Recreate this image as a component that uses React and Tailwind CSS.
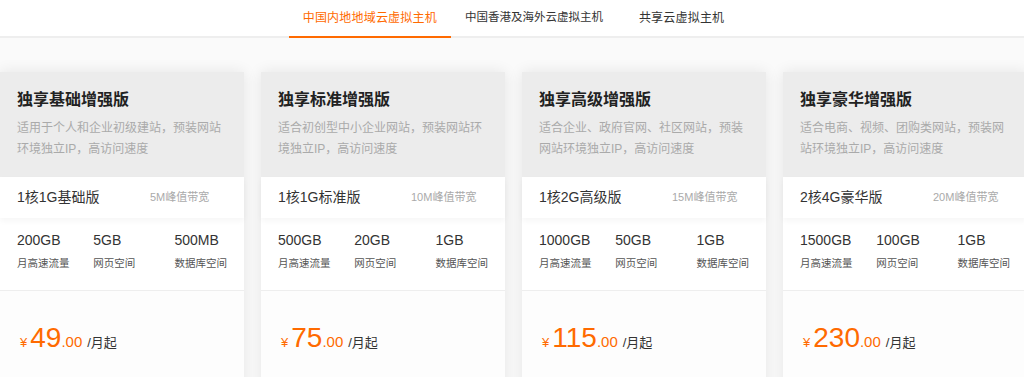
const tabs = [
  { label: '中国内地地域云虚拟主机', active: true, cls: 'px-[14px] text-[12px] tracking-[0.2px]' },
  { label: '中国香港及海外云虚拟主机', active: false, cls: 'px-[14px] text-[11.5px]' },
  { label: '共享云虚拟主机', active: false, cls: 'pl-[22px] pr-[14px] text-[12px] tracking-[0.2px]' },
];

const plans = [
  {
    title: '独享基础增强版',
    desc: '适用于个人和企业初级建站，预装网站环境独立IP，高访问速度',
    spec: '1核1G基础版',
    bw: '5M峰值带宽',
    stats: ['200GB', '5GB', '500MB'],
    price: '49',
  },
  {
    title: '独享标准增强版',
    desc: '适合初创型中小企业网站，预装网站环境独立IP，高访问速度',
    spec: '1核1G标准版',
    bw: '10M峰值带宽',
    stats: ['500GB', '20GB', '1GB'],
    price: '75',
  },
  {
    title: '独享高级增强版',
    desc: '适合企业、政府官网、社区网站，预装网站环境独立IP，高访问速度',
    spec: '1核2G高级版',
    bw: '15M峰值带宽',
    stats: ['1000GB', '50GB', '1GB'],
    price: '115',
  },
  {
    title: '独享豪华增强版',
    desc: '适合电商、视频、团购类网站，预装网站环境独立IP，高访问速度',
    spec: '2核4G豪华版',
    bw: '20M峰值带宽',
    stats: ['1500GB', '100GB', '1GB'],
    price: '230',
  },
];

const labels = ['月高速流量', '网页空间', '数据库空间'];

const PlanCard = ({ plan }) => (
  <div className="w-[244px] shrink-0 bg-[#fdfdfd] shadow-[0_0_14px_rgba(0,0,0,0.09)]">
    {/* Header */}
    <div className="bg-[#ececec] px-[17px] pt-[16px] pb-[16px] h-[105px]">
      <h3 className="text-[16px] leading-[24px] font-bold text-[#222]">{plan.title}</h3>
      <p className="mt-[6px] text-[12px] leading-[21px] text-[#aaa]">{plan.desc}</p>
    </div>

    {/* Spec row */}
    <div className="relative z-[1] h-[41px] bg-white flex items-center px-[17px] shadow-[0_3px_6px_rgba(0,0,0,0.04)]">
      <span className="w-[133px] text-[14px] text-[#333]">{plan.spec}</span>
      <span className="text-[11px] text-[#aaa]">{plan.bw}</span>
    </div>

    {/* Stats */}
    <div className="flex px-[17px] pt-[12px] pb-[19px] border-b border-[#eee] bg-white">
      {plan.stats.map((s, i) => (
        <div key={i} className={`whitespace-nowrap ${i === 0 ? 'w-[77px]' : i === 1 ? 'w-[82px]' : 'flex-1'}`}>
          <div className="text-[14px] leading-[20px] text-[#333]">{s}</div>
          <div className="mt-[5px] text-[10.5px] leading-[16px] text-[#555]">{labels[i]}</div>
        </div>
      ))}
    </div>

    {/* Price */}
    <div className="flex items-baseline px-[20px] pt-[33px] pb-[40px]">
      <span className="text-[13px] text-[#ff6a00] mr-[3px]">¥</span>
      <span className="text-[28px] leading-none text-[#ff6a00]">{plan.price}</span>
      <span className="text-[15px] text-[#ff6a00]">.00</span>
      <span className="ml-[5px] text-[13px] text-[#333]">/月起</span>
    </div>
  </div>
);

export default function App() {
  return (
    <div
      className="w-[1024px] h-[377px] overflow-hidden bg-[#fafafa]"
      style={{ fontFamily: '"Liberation Sans", Arial, "Noto Sans CJK SC", sans-serif' }}
    >
      {/* Tabs */}
      <div className="bg-white border-b-2 border-[#eee]">
        <div className="flex justify-center h-[36px] pl-[3px]">
          {tabs.map((t) => (
            <div
              key={t.label}
              className={`${t.cls} flex items-center relative ${t.active ? 'text-[#ff6a00]' : 'text-[#333]'}`}
            >
              {t.label}
              {t.active && <div className="absolute left-0 right-0 -bottom-[2px] h-[2px] bg-[#ff6a00]" />}
            </div>
          ))}
        </div>
      </div>

      {/* Cards */}
      <div className="flex gap-[17px] pt-[34px]">
        {plans.map((p) => (
          <PlanCard key={p.title} plan={p} />
        ))}
      </div>
    </div>
  );
}
